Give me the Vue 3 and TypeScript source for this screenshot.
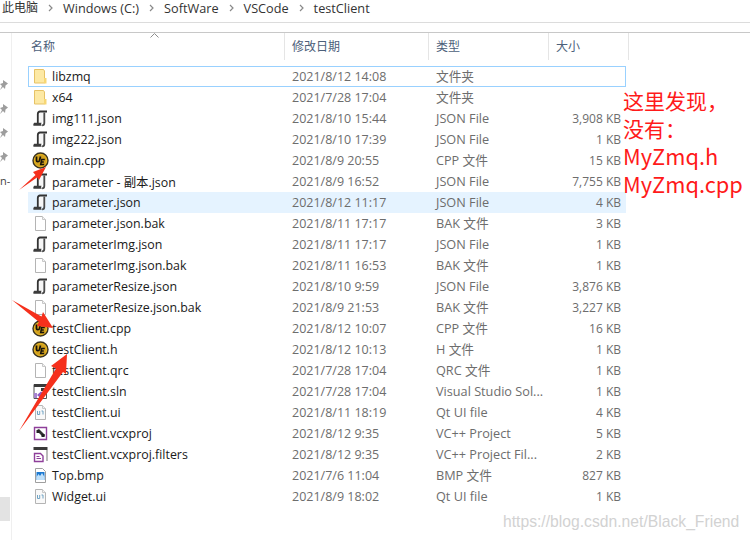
<script setup lang="ts">
interface FileRow {
  name: string;
  date: string;
  type: string;
  size: string;
  icon: string;
  state?: string;
}

const crumbs = ["此电脑", "Windows (C:)", "SoftWare", "VSCode", "testClient"];
const pinRows = [0, 1, 2, 3];

const files: FileRow[] = [
  { name: "libzmq", date: "2021/8/12 14:08", type: "文件夹", size: "", icon: "folder", state: "focused" },
  { name: "x64", date: "2021/7/28 17:04", type: "文件夹", size: "", icon: "folder" },
  { name: "img111.json", date: "2021/8/10 15:44", type: "JSON File", size: "3,908 KB", icon: "script" },
  { name: "img222.json", date: "2021/8/10 17:39", type: "JSON File", size: "1 KB", icon: "script" },
  { name: "main.cpp", date: "2021/8/9 20:55", type: "CPP 文件", size: "15 KB", icon: "ue" },
  { name: "parameter - 副本.json", date: "2021/8/9 16:52", type: "JSON File", size: "7,755 KB", icon: "script" },
  { name: "parameter.json", date: "2021/8/12 11:17", type: "JSON File", size: "4 KB", icon: "script", state: "hover" },
  { name: "parameter.json.bak", date: "2021/8/11 17:17", type: "BAK 文件", size: "3 KB", icon: "blank" },
  { name: "parameterImg.json", date: "2021/8/11 17:17", type: "JSON File", size: "1 KB", icon: "script" },
  { name: "parameterImg.json.bak", date: "2021/8/11 16:53", type: "BAK 文件", size: "1 KB", icon: "blank" },
  { name: "parameterResize.json", date: "2021/8/10 9:59", type: "JSON File", size: "3,876 KB", icon: "script" },
  { name: "parameterResize.json.bak", date: "2021/8/9 21:53", type: "BAK 文件", size: "3,227 KB", icon: "blank" },
  { name: "testClient.cpp", date: "2021/8/12 10:07", type: "CPP 文件", size: "16 KB", icon: "ue" },
  { name: "testClient.h", date: "2021/8/12 10:13", type: "H 文件", size: "1 KB", icon: "ue" },
  { name: "testClient.qrc", date: "2021/7/28 17:04", type: "QRC 文件", size: "1 KB", icon: "blank" },
  { name: "testClient.sln", date: "2021/7/28 17:04", type: "Visual Studio Sol...", size: "1 KB", icon: "sln" },
  { name: "testClient.ui", date: "2021/8/11 18:19", type: "Qt UI file", size: "4 KB", icon: "ui" },
  { name: "testClient.vcxproj", date: "2021/8/12 9:35", type: "VC++ Project", size: "5 KB", icon: "vcx" },
  { name: "testClient.vcxproj.filters", date: "2021/8/12 9:35", type: "VC++ Project Fil...", size: "2 KB", icon: "filters" },
  { name: "Top.bmp", date: "2021/7/6 11:04", type: "BMP 文件", size: "827 KB", icon: "bmp" },
  { name: "Widget.ui", date: "2021/8/9 18:02", type: "Qt UI file", size: "1 KB", icon: "ui" },
];
</script>

<template>
  <div class="explorer">
    <div class="crumbs">
      <template v-for="(c, i) in crumbs" :key="c">
        <span class="crumb">{{ c }}</span>
        <svg v-if="i < crumbs.length - 1" class="chev" width="5" height="8" viewBox="0 0 5 8">
          <path d="M1 1l3 3-3 3" fill="none" stroke="#8a8a8a" stroke-width="1.2" />
        </svg>
      </template>
    </div>
    <div class="toolbar-gap"></div>

    <div class="body">
      <aside class="side">
        <svg v-for="p in pinRows" :key="p" class="pin" width="8" height="10" viewBox="0 0 8 10">
          <path d="M3 0l5 3.500-2.500 2-.5 3.500-2-2-3 3 2-4-2-2 3-1z" fill="#9d9d9d" />
        </svg>
        <span class="side-text">n-</span>
        <div class="side-thumb"></div>
      </aside>

      <main class="list">
        <div class="head">
          <svg class="caret" width="9" height="5" viewBox="0 0 9 5">
            <path d="M.5 4.500l4-4 4 4" fill="none" stroke="#8d8d8d" />
          </svg>
          <div class="hcell">名称</div>
          <div class="hcell">修改日期</div>
          <div class="hcell">类型</div>
          <div class="hcell">大小</div>
        </div>

        <div class="rows">
          <div v-for="f in files" :key="f.name" class="row" :class="f.state">
            <div class="name">
              <svg class="icon" width="17" height="17" viewBox="0 0 17 17">
                <template v-if="f.icon === 'folder'">
                  <path d="M2.500 1.500h9l1 1.500v12h-10z" fill="#fde9a4" stroke="#e6c266" />
                  <path d="M12 10h2.500v5.500H12z" fill="#f7d774" />
                </template>
                <template v-else-if="f.icon === 'script'">
                  <path d="M6 2.500h7.500v10H6z" fill="#f6f6f6" />
                  <path d="M5.800 13V4c0-1.600 1-2.500 2.200-2.500h7" fill="none" stroke="#333" stroke-width="1.800" />
                  <path d="M12.300 2.500v10.500c0 1.400-1 2.300-2.200 2.300" fill="none" stroke="#4a4a4a" stroke-width="1.800" />
                  <path d="M1.500 15.800h8.500c-1-.6-1-2.300-.4-3H2.200c-.9.7-1.100 2.100-.7 3z" fill="#3c3c3c" />
                </template>
                <template v-else-if="f.icon === 'ue'">
                  <circle cx="8.500" cy="8.500" r="7.500" fill="#e6b422" stroke="#3a3320" stroke-width="1.400" />
                  <circle cx="8.500" cy="8.500" r="5.700" fill="#d2a11f" />
                  <path d="M4.500 4.500v4c0 1.500 2.500 1.500 3 0l1-4" fill="none" stroke="#17130a" stroke-width="1.700" />
                  <path d="M12.800 7.500H9.700l-1 5h3.500M9.500 10h2.300" fill="none" stroke="#17130a" stroke-width="1.500" />
                </template>
                <template v-else-if="f.icon === 'blank'">
                  <path d="M3.500 1.500h7l3 3v11h-10z" fill="#fff" stroke="#b4b4b4" />
                  <path d="M10.500 1.500v3h3" fill="#f2f2f2" stroke="#c8c8c8" />
                </template>
                <template v-else-if="f.icon === 'ui'">
                  <path d="M3.500 1.500h7l3 3v11h-10z" fill="#f9f9f9" stroke="#b4b4b4" />
                  <path d="M10.500 1.500v3h3" fill="#f2f2f2" stroke="#c8c8c8" />
                  <path d="M5.500 7v3.500h2.200V7M9.500 7h1.500v3.500" fill="none" stroke="#6fa3c4" />
                </template>
                <template v-else-if="f.icon === 'sln'">
                  <path d="M2 1.500h12.500v14H2z" fill="#fff" stroke="#555" />
                  <path d="M2 1h13v3H2z" fill="#3a3a3a" />
                  <path d="M9 5h5v3H9z" fill="#3a3a3a" />
                  <path d="M2 10l3 2 4-3.500 2 1v5l-2 1-4-3.500-3 2z" fill="#8f5bc4" />
                  <path d="M2 10h3v5H2z" fill="#a683d0" />
                </template>
                <template v-else-if="f.icon === 'vcx'">
                  <path d="M2.500 2.500h12v12h-12z" fill="#fff" stroke="#8e3f9a" stroke-width="1.400" />
                  <path d="M5 5l2-1 2 2 2 2 2 2-1 2-2-1-2-2-2-2z" fill="#333" />
                  <path d="M4.500 5h3v3h-3zM9.500 9h3v3h-3z" fill="#222" />
                </template>
                <template v-else-if="f.icon === 'filters'">
                  <path d="M1.500 1h14v3h-14z" fill="#3a3a3a" />
                  <path d="M14.500 4h1v11h-1z" fill="#777" />
                  <path d="M2.500 7.500h6l2.500 2.500v5.500H2.500z" fill="#fff" stroke="#8e3f9a" stroke-width="1.400" />
                  <path d="M4.500 10.500h3M4.500 12.500h4.500" stroke="#8e3f9a" />
                </template>
                <template v-else-if="f.icon === 'bmp'">
                  <path d="M3.500 1.500h7l3 3v11h-10z" fill="#fff" stroke="#9f9f9f" />
                  <path d="M4.500 5h8v8h-8z" fill="#1b78d0" />
                  <path d="M4.500 13v-3l2-3 1.500 2 2-3 2.500 4v3z" fill="#bfe0fa" />
                </template>
              </svg>
              <span class="label">{{ f.name }}</span>
            </div>
            <div class="cell date">{{ f.date }}</div>
            <div class="cell type">{{ f.type }}</div>
            <div class="cell size">{{ f.size }}</div>
          </div>
        </div>
      </main>
    </div>

    <!-- red markup drawn over the screenshot -->
    <div class="note">
      <div class="note-cn">这里发现，</div>
      <div class="note-cn">没有：</div>
      <div>MyZmq.h</div>
      <div>MyZmq.cpp</div>
    </div>
    <svg class="arrows" width="750" height="540" viewBox="0 0 750 540">
      <path d="M46 167L33 172 35.500 175 19 190 37 177.500 39 180z" fill="#f5301c" />
      <path d="M53 328L43 312 41.500 316.500 12 300 39 322 37 326z" fill="#f5301c" />
      <path d="M67 354L51 366 56 368.500 19 431 63 372 66 374z" fill="#f5301c" />
    </svg>
    <div class="mark">https://blog.csdn.net/Black_Friend</div>
  </div>
</template>

<style>
html,
body {
  margin: 0;
  background: #fff;
}
</style>

<style scoped>
.explorer {
  position: relative;
  width: 750px;
  height: 540px;
  overflow: hidden;
  background: #fff;
  font-family: "Open Sans", "Noto Sans CJK SC", sans-serif;
  font-size: 12px;
  color: #1a1a1a;
}

.crumbs {
  display: flex;
  align-items: center;
  height: 15px;
  padding-top: 1px;
  padding-left: 2px;
  gap: 10px;
  color: #333;
  box-sizing: border-box;
}

.crumb {
  font-size: 12.700px;
  line-height: 14px;
}

.crumb:first-child {
  font-size: 12px;
}

.toolbar-gap {
  height: 7px;
  border-bottom: 1px solid #dcdcdc;
  margin-bottom: 9px;
}

.body {
  display: flex;
  border-top: 1px solid #c8c8c8;
  height: 507px;
}

.side {
  position: relative;
  width: 12px;
  flex: none;
  border-right: 1px solid #efefef;
  display: flex;
  flex-direction: column;
  align-items: flex-start;
  gap: 14px;
  padding-top: 47px;
  box-sizing: border-box;
}

.side-text {
  margin-top: -1px;
  font-size: 11px;
  line-height: 12px;
  color: #444;
}

.side-thumb {
  position: absolute;
  left: 0;
  top: 464px;
  width: 10px;
  height: 24px;
  background: #e3e3e3;
}

.list {
  flex: 1;
  min-width: 0;
  padding-left: 16px;
}

.head {
  position: relative;
  display: grid;
  grid-template-columns: 257px 144px 120px 80px;
  height: 27px;
  margin-bottom: 6px;
  color: #4c607a;
}

.caret {
  position: absolute;
  left: 122px;
  top: 0;
}

.hcell {
  padding-left: 3px;
  height: 27px;
  line-height: 27px;
  border-right: 1px solid #e5e5e5;
  box-sizing: border-box;
}

.hcell + .hcell {
  padding-left: 7px;
}

.rows {
  display: flex;
  flex-direction: column;
  width: 598px;
}

.row {
  display: grid;
  grid-template-columns: 257px 144px 120px 1fr;
  align-items: center;
  height: 21px;
  border: 1px solid transparent;
  box-sizing: border-box;
}

.row.focused {
  border-color: #99d1ff;
}

.row.hover {
  background: #e5f3ff;
}

.name {
  display: flex;
  align-items: center;
  gap: 3px;
  padding-left: 3px;
  min-width: 0;
}

.icon {
  flex: none;
}

.label {
  font-size: 12.400px;
  white-space: nowrap;
  color: #1a1a1a;
}

.cell {
  color: #6d6d6d;
  padding-left: 6px;
  white-space: nowrap;
}

.date {
  font-size: 12.500px;
}

.type {
  font-size: 12.700px;
  margin-top: -2px;
}

.size {
  padding: 0 4px 0 0;
  text-align: right;
}

.note {
  position: absolute;
  left: 623px;
  top: 86px;
  font-family: "Noto Sans CJK SC", "Noto Sans", sans-serif;
  font-size: 21.800px;
  line-height: 28px;
  color: #ff1a1a;
  white-space: nowrap;
}

.note-cn {
  font-size: 21px;
}

.arrows {
  position: absolute;
  left: 0;
  top: 0;
  pointer-events: none;
}

.mark {
  position: absolute;
  left: 503px;
  top: 512px;
  font-family: "Liberation Sans", sans-serif;
  font-size: 15.700px;
  line-height: 20px;
  color: #d2d2d2;
  white-space: nowrap;
}
</style>
